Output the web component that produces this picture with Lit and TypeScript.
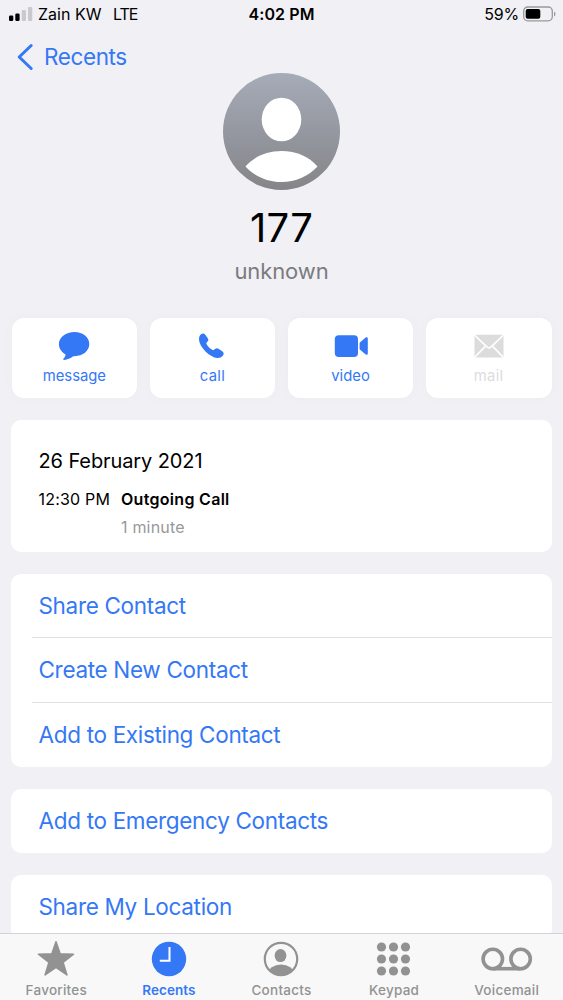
import { LitElement, html, css, svg } from "lit";
import { customElement } from "lit/decorators.js";

const icons = {
  message: svg`<svg width="32" height="30" viewBox="0 0 32 30"><path fill="currentColor" d="M16.500 1C25 1 31.300 6.200 31.300 13.100S25 25.200 16.500 25.200h-1.300C12.600 27.300 9.200 28.800 6 28.900c-.8 0-1-.8-.5-1.300 1.200-1.200 2-2.700 2.100-4.100C3.500 21.400.9 17.600.9 13.100.9 6.200 8 1 16.500 1z"/></svg>`,
  call: svg`<svg width="28" height="28" viewBox="0 0 28 28"><path fill="currentColor" d="M3 2.300C4.300 1.200 6.300 1.300 7.300 2.700L9.800 6.200C10.600 7.500 10.500 8.700 9.600 9.600L8.600 10.600C8.200 11.200 8.300 11.700 8.700 12.400 10 14.400 12 16.400 14.200 17.800 14.900 18.200 15.500 18.300 16 17.800L17.100 16.900C18.100 16.100 19.300 16 20.500 16.800L24.200 19.200C26 20.500 26.100 22.200 24.700 23.800 23.300 25.400 21.300 26.300 19 26 15.800 25.600 11.500 23.300 7.700 19.700 3.700 15.700 1.200 11.300 1 7.600 .9 5.300 1.600 3.500 3 2.300z"/></svg>`,
  video: svg`<svg width="34" height="24" viewBox="0 0 34 24"><rect x=".8" y="1.200" width="23.200" height="21.800" rx="4" fill="currentColor"/><path fill="currentColor" d="M25.600 8.700l5.800-5c1-.9 2.400-.5 2.400.8v15c0 1.300-1.400 1.700-2.400.8l-5.800-5z"/></svg>`,
  mail: svg`<svg width="30" height="24" viewBox="0 0 30 24"><rect x=".5" y=".8" width="29" height="22.800" rx="1.500" fill="currentColor"/><path d="M1 1.500L12.600 12.700q2.400 2.300 4.800 0L29 1.500M1 23L11 12.600M29 23L19 12.600" fill="none" stroke="#fff" stroke-width="1.700"/></svg>`,
  star: svg`<svg width="38" height="36" viewBox="0 0 38 36"><path fill="currentColor" stroke="currentColor" stroke-width="1.600" stroke-linejoin="round" d="M19 .8L23.200 12.900 36.500 13.200 26 21.300 29.900 33.900 19 26.300 8.100 33.900 12 21.300 1.500 13.200 14.800 12.900z"/></svg>`,
  clock: svg`<svg width="36" height="36" viewBox="0 0 36 36"><circle cx="18" cy="18" r="17.200" fill="currentColor"/><path d="M18.500 6v13.800H8.800" fill="none" stroke="#fff" stroke-width="2"/></svg>`,
  person: svg`<svg width="36" height="36" viewBox="0 0 36 36"><clipPath id="ring"><circle cx="18" cy="18" r="16.500"/></clipPath><circle cx="18" cy="18" r="16.200" fill="none" stroke="currentColor" stroke-width="2.200"/><ellipse cx="17.500" cy="14.600" rx="5.900" ry="6.500" fill="currentColor"/><ellipse cx="18" cy="32.500" rx="13" ry="9" fill="currentColor" clip-path="url(#ring)"/></svg>`,
  keypad: svg`<svg width="36" height="36" viewBox="0 0 36 36">${[6, 18, 30].map(y => [6, 18, 30].map(x => svg`<circle cx=${x - 0.5} cy=${y} r="4.600" fill="currentColor"/>`))}</svg>`,
  voicemail: svg`<svg width="52" height="36" viewBox="0 0 52 36"><g fill="none" stroke="currentColor" stroke-width="3.600"><circle cx="11.800" cy="18" r="9.700"/><circle cx="39.600" cy="18" r="9.700"/><path d="M11.800 27.700h27.800"/></g></svg>`,
};

@customElement("app-root")
export class AppRoot extends LitElement {
  static styles = css`
    :host { display: flex; flex-direction: column; width: 563px; height: 1000px; overflow: hidden; background: #f1f0f5; color: #000; font-family: Inter, "Noto Sans", sans-serif; --blue: #3478f6; }
    svg { display: block; flex: none; }
    .status { display: grid; grid-template-columns: 1fr auto 1fr; align-items: center; height: 28px; flex: none; padding: 0 7px 0 9px; font-size: 16px; line-height: 20px; white-space: pre; }
    .left { display: flex; align-items: center; }
    .bars { margin-right: 5px; }
    .carrier { letter-spacing: 0; }
    .net { margin-left: 11.500px; letter-spacing: -1px; }
    .time { font-weight: 600; letter-spacing: .1px; margin-right: 2px; }
    .right { display: flex; align-items: center; justify-content: flex-end; gap: 4px; letter-spacing: -.2px; }
    .nav { display: flex; align-items: center; height: 45px; flex: none; box-sizing: border-box; padding: 12px 0 0 16px; gap: 10px; color: var(--blue); font-size: 22.500px; letter-spacing: -.4px; }
    .hero { display: flex; flex-direction: column; align-items: center; height: 245px; flex: none; }
    .name { font-size: 40px; line-height: 48px; margin-top: 14px; letter-spacing: .3px; }
    .sub { font-size: 22px; line-height: 28px; margin-top: 5px; color: #7b7b7f; letter-spacing: -.1px; }
    .actions { display: grid; grid-template-columns: repeat(4, 1fr); gap: 12.300px; padding: 0 11.500px; height: 80px; flex: none; }
    .action { display: flex; flex-direction: column; align-items: center; background: #fff; border-radius: 12px; color: var(--blue); font-size: 14.800px; line-height: 20px; box-shadow: 0 0 14px rgba(0,0,0,.025); }
    .action.off { color: #dcdcdd; }
    .glyph { height: 30px; margin: 13px 0 5px; display: flex; align-items: center; }
    .t-call, .t-mail { letter-spacing: .3px; }
    .card { flex: none; margin: 22px 11px 0; background: #fff; border-radius: 10px; overflow: hidden; }
    .log { box-sizing: border-box; height: 132px; padding: 28px 27.500px 0; }
    .date { font-size: 20px; line-height: 26px; letter-spacing: -.1px; }
    .entry { display: grid; grid-template-columns: 82.500px 1fr; row-gap: 6px; margin-top: 14px; font-size: 16px; line-height: 22px; letter-spacing: .2px; }
    .kind { font-weight: 600; letter-spacing: .3px; }
    .len { grid-column: 2; color: #98989a; }
    .row { display: flex; align-items: center; height: 64.330px; box-sizing: border-box; padding: 0 0 1px 27.500px; font-size: 22.500px; color: var(--blue); letter-spacing: -.32px; }
    .line { height: 1px; margin: -1px 0 0 21px; background: #dfdfe2; }
    .tabs { position: absolute; left: 0; top: 933px; width: 563px; height: 67px; box-sizing: border-box; border-top: 1px solid #d3d3d6; background: #f8f8f8; display: grid; grid-template-columns: repeat(5, 1fr); }
    .tab { display: flex; flex-direction: column; align-items: center; color: #929292; font-size: 13.500px; font-weight: 500; line-height: 18px; padding-top: 7px; gap: 4px; letter-spacing: .25px; }
    .tab.on { color: var(--blue); font-weight: 600; letter-spacing: .1px; }
  `;

  private action(icon: keyof typeof icons, off = false) {
    return html`<div class="action ${off ? "off" : ""}"><div class="glyph">${icons[icon]}</div><span class="t-${icon}">${icon}</span></div>`;
  }

  private card(rows: string[]) {
    return html`<div class="card">${rows.map((r, i) => html`${i ? html`<div class="line"></div>` : ""}<div class="row"><span>${r}</span></div>`)}</div>`;
  }

  render() {
    const tabs: [keyof typeof icons, string][] = [["star", "Favorites"], ["clock", "Recents"], ["person", "Contacts"], ["keypad", "Keypad"], ["voicemail", "Voicemail"]];
    return html`
      <div class="status">
        <div class="left">
          <svg class="bars" width="24" height="16" viewBox="0 0 24 16"><rect x="0" y="9.500" width="4.300" height="5.500" rx="1.300"/><rect x="6.300" y="7.500" width="4.300" height="7.500" rx="1.300"/><g fill="#c9c9ce"><rect x="12.700" y="4" width="4.300" height="11" rx="1.300"/><rect x="19" y="1" width="4.300" height="14" rx="1.300"/></g></svg>
          <span class="carrier">Zain KW</span><span class="net">LTE</span>
        </div>
        <span class="time">4:02 PM</span>
        <div class="right"><span>59%</span><svg width="33" height="16" viewBox="0 0 33 16"><rect x=".7" y="1" width="28.600" height="13.800" rx="4" fill="none" stroke="#99999c" stroke-width="1.300"/><rect x="2.700" y="3" width="14.600" height="9.800" rx="2"/><path d="M31 5.500c2 1 2 4 0 5z" fill="#99999c"/></svg></div>
      </div>
      <div class="nav"><svg width="18" height="28" viewBox="0 0 18 28"><path d="M15.200 2.500L3.200 14l12 11.500" fill="none" stroke="currentColor" stroke-width="3" stroke-linecap="round" stroke-linejoin="round"/></svg><span>Recents</span></div>
      <div class="hero">
        <svg width="117" height="117" viewBox="0 0 117 117">
          <defs><linearGradient id="g" x1="0" y1="0" x2="0" y2="1"><stop offset="0" stop-color="#a5abb8"/><stop offset="1" stop-color="#858589"/></linearGradient></defs>
          <circle cx="58.500" cy="58.500" r="58.500" fill="url(#g)"/><ellipse cx="58.500" cy="46.500" rx="19.800" ry="21.800" fill="#fff"/>
          <path d="M22.500 93.500C31 83.500 44 78 58.500 78s27.500 5.500 36 15.500C85 103.500 72.500 109 58.500 109S32 103.500 22.500 93.500z" fill="#fff"/>
        </svg>
        <div class="name">177</div><div class="sub">unknown</div>
      </div>
      <div class="actions">${this.action("message")}${this.action("call")}${this.action("video")}${this.action("mail", true)}</div>
      <div class="card log">
        <div class="date">26 February 2021</div>
        <div class="entry"><span class="at">12:30 PM</span><span class="kind">Outgoing Call</span><span class="len">1 minute</span></div>
      </div>
      ${this.card(["Share Contact", "Create New Contact", "Add to Existing Contact"])}
      ${this.card(["Add to Emergency Contacts"])}
      ${this.card(["Share My Location"])}
      <div class="tabs">${tabs.map(([i, t]) => html`<div class="tab ${i === "clock" ? "on" : ""}">${icons[i]}<span>${t}</span></div>`)}</div>
    `;
  }
}
